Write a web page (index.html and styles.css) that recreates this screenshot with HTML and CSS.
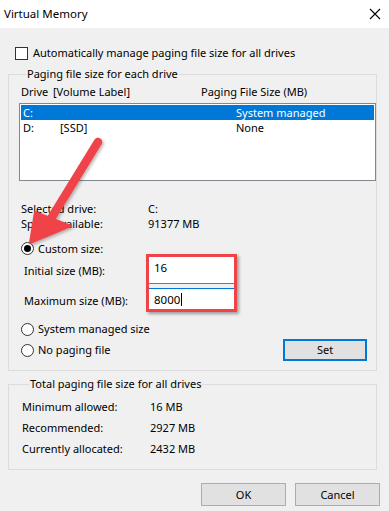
FILE: index.html
```html
<!DOCTYPE html>
<html>
<head>
<meta charset="utf-8">
<link rel="stylesheet" href="styles.css">
</head>
<body>
<div class="window">
  <div class="titlebar">
    <span class="title">Virtual Memory</span>
    <svg class="close" width="12" height="12" viewBox="0 0 12 12"><path d="M1 1 L11 11 M11 1 L1 11" stroke="#000" stroke-width="1.1" fill="none"/></svg>
  </div>
  <div class="content">
    <div class="check-row"><span class="checkbox"></span><span>Automatically manage paging file size for all drives</span></div>

    <div class="group group-drives">
      <div class="legend">Paging file size for each drive</div>
      <div class="list-head"><span class="c-drive">Drive</span><span class="c-label">[Volume Label]</span><span class="c-size">Paging File Size (MB)</span></div>
      <div class="listbox">
        <div class="lrow selected"><span class="c-drive">C:</span><span class="c-label"></span><span class="c-size">System managed</span></div>
        <div class="lrow"><span class="c-drive">D:</span><span class="c-label">[SSD]</span><span class="c-size">None</span></div>
      </div>
      <div class="info first"><span class="info-label">Selected drive:</span><span>C:</span></div>
      <div class="info"><span class="info-label">Space available:</span><span>91377 MB</span></div>
      <div class="radio-row custom"><span class="radio checked"></span><span>Custom size:</span></div>
      <div class="sizes">
        <span class="size-label l1">Initial size (MB):</span>
        <div class="field f1">16</div>
        <span class="size-label l2">Maximum size (MB):</span>
        <div class="field f2">8000<span class="caret"></span></div>
        <div class="highlight"></div>
      </div>
      <div class="radio-row sys"><span class="radio"></span><span>System managed size</span></div>
      <div class="radio-row nopage"><span class="radio"></span><span>No paging file</span><span class="btn set">Set</span></div>
    </div>

    <div class="group group-total">
      <div class="legend">Total paging file size for all drives</div>
      <div class="trow first"><span class="t-label">Minimum allowed:</span><span>16 MB</span></div>
      <div class="trow"><span class="t-label">Recommended:</span><span>2927 MB</span></div>
      <div class="trow"><span class="t-label">Currently allocated:</span><span>2432 MB</span></div>
    </div>

    <div class="buttons"><span class="btn">OK</span><span class="btn">Cancel</span></div>
  </div>

  <svg class="arrow" width="389" height="511" viewBox="0 0 389 511">
    <defs>
      <filter id="sh" x="-20%" y="-20%" width="140%" height="140%">
        <feDropShadow dx="1.5" dy="1.5" stdDeviation="1.5" flood-color="#000" flood-opacity="0.3"/>
      </filter>
    </defs>
    <g filter="url(#sh)" fill="#ef4348" stroke="#ef4348">
      <line x1="98" y1="142" x2="52" y2="217" stroke-width="8.5" stroke-linecap="round"/>
      <polygon points="30,243 35,212 71,226" stroke-width="2" stroke-linejoin="round"/>
    </g>
  </svg>
</div>
</body>
</html>
```

FILE: styles.css
```css
* { box-sizing: border-box; }
html, body { margin: 0; padding: 0; }
body {
  font-family: "Noto Sans", "Open Sans", sans-serif;
  font-size: 11px;
  color: #000;
  background: #f0f0f0;
}
.window {
  position: relative;
  width: 389px;
  height: 511px;
  background: #f0f0f0;
  overflow: hidden;
}
.titlebar {
  height: 28px;
  background: #fff;
  display: flex;
  align-items: center;
  justify-content: space-between;
  padding: 0 8px 2px 4px;
}
.title { font-size: 11.5px; }
.close { margin-top: 1px; }

.content {
  padding: 17px 12px 0 8px;
}
.check-row {
  height: 16px;
  display: flex;
  align-items: center;
  padding-left: 7px;
  gap: 5px;
  line-height: 16px;
}
.checkbox {
  width: 13px;
  height: 13px;
  border: 1px solid #333;
  background: #fff;
}

.group {
  border: 1px solid #dcdcdc;
  width: 369px;
  margin-top: 13px;
}
.legend {
  display: table;
  margin: -9px 0 0 7px;
  padding: 0 1px;
  line-height: 16px;
  background: #f0f0f0;
}
.group-drives {
  padding: 0 0 9px 10px;
}
.list-head {
  display: flex;
  height: 16px;
  line-height: 16px;
  margin: 2px 0 0 2px;
}
.list-head .c-drive { width: 32px; }
.list-head .c-label { width: 148px; }
.listbox {
  margin-top: 3px;
  height: 78px;
  border: 1px solid #828790;
  background: #fff;
  padding: 1px 1px 0 1px;
}
.lrow {
  display: flex;
  height: 15px;
  line-height: 15px;
  padding-left: 2px;
}
.lrow.selected { background: #0078d7; color: #fff; }
.lrow .c-drive { width: 37px; }
.lrow .c-label { width: 176px; }

.info {
  display: flex;
  height: 15px;
  line-height: 15px;
  margin-left: 2px;
}
.info.first { margin-top: 20px; }
.info-label { width: 127px; }

.radio-row {
  display: flex;
  align-items: center;
  gap: 4px;
  margin-left: 2px;
  height: 16px;
  line-height: 16px;
}
.radio {
  width: 13px;
  height: 13px;
  border-radius: 50%;
  border: 1px solid #333;
  background: #fff;
  display: flex;
  align-items: center;
  justify-content: center;
}
.radio.checked::after {
  content: "";
  width: 7px;
  height: 7px;
  border-radius: 50%;
  background: #000;
}
.radio-row.custom { margin-top: 10px; height: 15px; }

.sizes {
  position: relative;
  display: grid;
  grid-template-columns: 124px 88px;
  grid-template-rows: 28px 23px;
  row-gap: 4px;
  align-items: center;
  margin-left: 5px;
}
.size-label.l1 { padding-top: 1px; }
.size-label.l2 { padding-top: 2px; }
.field {
  height: 100%;
  background: #fff;
  padding-left: 5px;
  display: flex;
  align-items: center;
  font-size: 11.5px;
}
.f1 { border: 1px solid #7a7a7a; align-items: flex-start; padding-top: 3px; }
.f2 { border: 1px solid #0078d7; }
.caret {
  display: inline-block;
  width: 1px;
  height: 13px;
  background: #000;
  margin-left: 1px;
}
.highlight {
  position: absolute;
  left: 122px;
  top: -2px;
  width: 91px;
  height: 58px;
  border: 3px solid #ef4348;
  box-shadow: 2px 2px 3px rgba(0,0,0,0.35);
}

.radio-row.sys { margin-top: 10px; }
.radio-row.nopage { margin-top: 2px; height: 22px; }

.btn {
  display: flex;
  align-items: center;
  justify-content: center;
  width: 85px;
  height: 23px;
  background: #e1e1e1;
  border: 1px solid #adadad;
}
.btn.set {
  margin-left: auto;
  margin-right: 9px;
  width: 84px;
  height: 22px;
  border: 2px solid #0078d7;
}

.group-total {
  margin-top: 13px;
  padding: 0 0 10px 13px;
}
.trow {
  display: flex;
  height: 21px;
  align-items: center;
}
.trow.first { margin-top: 4px; }
.t-label { width: 128px; }

.buttons {
  display: flex;
  justify-content: flex-end;
  gap: 9px;
  margin-top: 13px;
  margin-right: -3px;
}

.arrow {
  position: absolute;
  left: 0;
  top: 0;
  pointer-events: none;
}
```
